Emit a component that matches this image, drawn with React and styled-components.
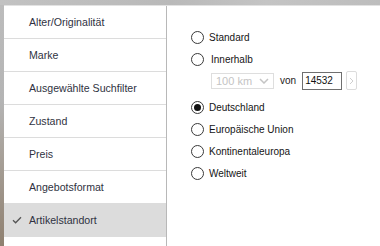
import React from "react";
import styled, { createGlobalStyle } from "styled-components";

const Global = createGlobalStyle`
  html, body { margin: 0; padding: 0; background: #fff; }
  body { font-family: "Liberation Sans", Arial, sans-serif; }
  * { box-sizing: border-box; }
`;

const Page = styled.div`
  width: 380px;
  height: 246px;
  overflow: hidden;
  display: grid;
  grid-template-rows: 5px 1fr;
  background: #fff;
`;

const Backdrop = styled.div`
  background: linear-gradient(90deg, #c2c2c2 0%, #b9b9b9 45%, #c4c4c4 70%, #bdbdbd 100%);
`;

const Body = styled.div`
  display: grid;
  grid-template-columns: 4px 1fr;
  min-height: 0;
`;

const SideStrip = styled.div`
  background: linear-gradient(180deg, #bcbcbc 0%, #b4b4b4 40%, #a9a39c 60%, #8f8070 100%);
`;

const Modal = styled.div`
  display: grid;
  grid-template-columns: 163px 1fr;
  border-top: 1px solid #e2e2e2;
  background: #fff;
  min-height: 0;
`;

const Sidebar = styled.ul`
  list-style: none;
  margin: 0;
  padding: 0;
  border-right: 1px solid #b8b8b8;
  display: flex;
  flex-direction: column;
`;

const NavItem = styled.li`
  height: 33px;
  flex: none;
  display: flex;
  align-items: center;
  padding-left: 8px;
  border-bottom: 1px solid #dcdcdc;
  background: ${(p) => (p.$active ? "#dcdcdc" : "#fff")};
  color: #2f3241;
  font-size: 10.6px;
`;

const Check = styled.span`
  width: 17px;
  height: 12px;
  display: flex;
  align-items: center;
  color: #555;
`;

const Options = styled.div`
  padding: 20px 0 0 24px;
  display: flex;
  flex-direction: column;
`;

const RadioRow = styled.label`
  height: 22px;
  display: flex;
  align-items: center;
  gap: ${(p) => (p.$wide ? "7px" : "5px")};
  font-size: 10px;
  color: #151515;
`;

const Radio = styled.span`
  width: 13px;
  height: 13px;
  border-radius: 50%;
  border: 1px solid #3a3a3a;
  display: flex;
  align-items: center;
  justify-content: center;
  background: #fff;
  &::after {
    content: "";
    width: 7px;
    height: 7px;
    border-radius: 50%;
    background: ${(p) => (p.$checked ? "#111" : "transparent")};
  }
`;

const RangeRow = styled.div`
  display: flex;
  align-items: center;
  gap: 6px;
  padding-left: 20px;
  height: 19px;
  margin: 1px 0 6px;
`;

const Select = styled.div`
  width: 63px;
  height: 16px;
  flex: none;
  border: 1px solid #dedede;
  display: flex;
  align-items: center;
  padding: 0 4px 0 4px;
  color: #c4c4c4;
  font-size: 11px;
  white-space: nowrap;
  svg { flex: none; margin-left: auto; }
`;

const Von = styled.span`
  font-size: 10px;
  color: #222;
`;

const Input = styled.div`
  width: 40px;
  height: 18px;
  border: 1px solid #6f6f6f;
  display: flex;
  align-items: center;
  padding-left: 2px;
  font-size: 10px;
  color: #111;
`;

const GoButton = styled.div`
  width: 11px;
  height: 19px;
  margin-left: -2px;
  border: 1px solid #dcdcdc;
  border-radius: 2px;
  display: flex;
  align-items: center;
  justify-content: center;
`;

const items = [
  "Alter/Originalität",
  "Marke",
  "Ausgewählte Suchfilter",
  "Zustand",
  "Preis",
  "Angebotsformat",
  "Artikelstandort",
];

export default function App() {
  return (
    <>
      <Global />
      <Page>
        <Backdrop />
        <Body>
          <SideStrip />
          <Modal>
            <Sidebar>
              {items.map((t, i) => {
                const active = i === items.length - 1;
                return (
                  <NavItem key={t} $active={active}>
                    <Check>
                      {active && (
                        <svg width="10" height="8" viewBox="0 0 10 8">
                          <path d="M1 4.2 L3.6 6.8 L9 1.2" fill="none" stroke="#555" strokeWidth="1.3" />
                        </svg>
                      )}
                    </Check>
                    {t}
                  </NavItem>
                );
              })}
            </Sidebar>
            <Options>
              <RadioRow>
                <Radio />
                Standard
              </RadioRow>
              <RadioRow $wide>
                <Radio />
                Innerhalb
              </RadioRow>
              <RangeRow>
                <Select>
                  100 km
                  <svg width="10" height="6" viewBox="0 0 10 6">
                    <path d="M1 1 L5 5 L9 1" fill="none" stroke="#c4c4c4" strokeWidth="1.5" />
                  </svg>
                </Select>
                <Von>von</Von>
                <Input>14532</Input>
                <GoButton>
                  <svg width="5" height="8" viewBox="0 0 5 8">
                    <path d="M1 1 L4 4 L1 7" fill="none" stroke="#cfcfcf" strokeWidth="1" />
                  </svg>
                </GoButton>
              </RangeRow>
              <RadioRow>
                <Radio $checked />
                Deutschland
              </RadioRow>
              <RadioRow>
                <Radio />
                Europäische Union
              </RadioRow>
              <RadioRow>
                <Radio />
                Kontinentaleuropa
              </RadioRow>
              <RadioRow>
                <Radio />
                Weltweit
              </RadioRow>
            </Options>
          </Modal>
        </Body>
      </Page>
    </>
  );
}
